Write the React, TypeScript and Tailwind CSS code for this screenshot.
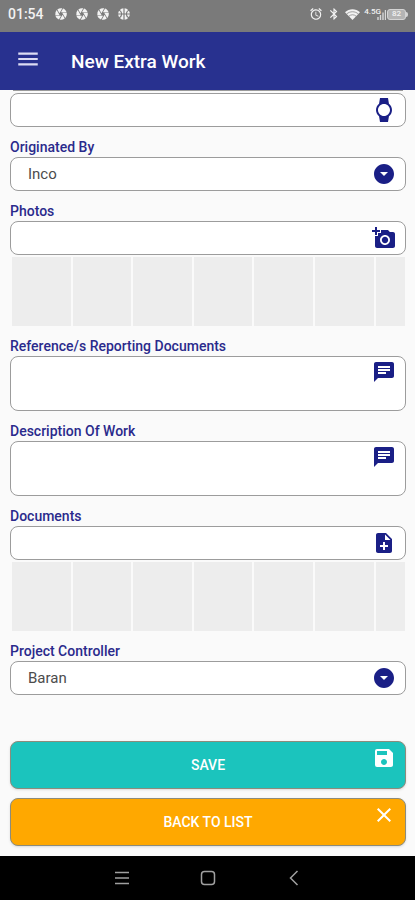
import { useState } from "react";
import type { ReactNode } from "react";
import {
  MdAddAPhoto,
  MdAlarm,
  MdArrowDropDownCircle,
  MdBluetooth,
  MdCamera,
  MdChat,
  MdClose,
  MdMenu,
  MdNoteAdd,
  MdSave,
  MdSportsBasketball,
  MdWatch,
} from "react-icons/md";

const boxClass =
  "flex rounded-lg border border-[#9c9c9c] bg-white pl-[17px] pr-[9px] text-[#1a1f86]";

function StatusBar() {
  return (
    <div className="flex h-8 items-start justify-between bg-[#7a7a7a] pl-2 pr-[7px] pt-1 text-[#f2f2f2]">
      <div className="flex h-5 items-center gap-[7px]">
        <span className="mr-[3px] text-sm font-medium">01:54</span>
        <MdCamera size={14} />
        <MdCamera size={14} />
        <MdCamera size={14} />
        <MdSportsBasketball size={14} />
      </div>
      <div className="flex h-5 items-center">
        <MdAlarm size={14} className="mr-1" />
        <MdBluetooth size={14} className="mr-1" />
        <svg width="15" height="11" viewBox="0 0 15 11" className="mr-1">
          <path d="M0 3.2C4.2-.8 10.8-.8 15 3.2L7.5 11z" fill="#f2f2f2" />
          <path
            d="M1.6 5C5 2 10 2 13.4 5M3.8 7.2C6 5.3 9 5.3 11.2 7.2"
            fill="none"
            stroke="#7a7a7a"
            strokeWidth="0.7"
          />
        </svg>
        <div className="flex h-3 items-start">
          <span className="text-[8px] font-medium leading-[8px]">4.5G</span>
        </div>
        <svg width="9" height="12" viewBox="0 0 9 12" className="-ml-1 mr-px">
          <path
            d="M1 12V9M3.5 12V7M6 12V4.5M8.5 12V2"
            stroke="#d8d8d8"
            strokeWidth="1.4"
          />
        </svg>
        <div className="flex items-center">
          <span className="flex h-[11px] w-[19px] items-center justify-center rounded-[3px] border border-[#d4d4d4] bg-[#b4b4b4] text-[8px] font-medium leading-[8px]">
            82
          </span>
          <span className="h-[5px] w-[2px] rounded-r-sm bg-[#d4d4d4]" />
        </div>
      </div>
    </div>
  );
}

function Label({ id, children }: { id: string; children: ReactNode }) {
  return (
    <label
      htmlFor={id}
      className="block h-5 text-sm font-medium leading-5 text-[#2a2a8c]"
    >
      {children}
    </label>
  );
}

function TextBox({
  id,
  name,
  action,
  icon,
}: {
  id: string;
  name?: string;
  action: string;
  icon: ReactNode;
}) {
  return (
    <div className={`${boxClass} h-[34px] items-center`}>
      <input
        id={id}
        aria-label={name}
        className="h-full min-w-0 flex-1 text-[15px] outline-none"
      />
      <button type="button" aria-label={action}>
        {icon}
      </button>
    </div>
  );
}

function SelectField({
  id,
  label,
  options,
}: {
  id: string;
  label: string;
  options: string[];
}) {
  const [value, setValue] = useState(options[0]);
  return (
    <div>
      <Label id={id}>{label}</Label>
      <div className={`${boxClass} h-[34px] items-center`}>
        <select
          id={id}
          value={value}
          onChange={(e) => setValue(e.target.value)}
          className="h-full min-w-0 flex-1 appearance-none bg-transparent text-[15px] text-[#4c4c4c] outline-none"
        >
          {options.map((o) => (
            <option key={o}>{o}</option>
          ))}
        </select>
        <MdArrowDropDownCircle size={24} className="pointer-events-none" />
      </div>
    </div>
  );
}

function NoteField({ id, label }: { id: string; label: string }) {
  return (
    <div>
      <Label id={id}>{label}</Label>
      <div className={`${boxClass} h-[55px] items-start pt-[3px]`}>
        <textarea
          id={id}
          className="h-full min-w-0 flex-1 resize-none text-[15px] outline-none"
        />
        <button type="button" aria-label="Edit text">
          <MdChat size={24} />
        </button>
      </div>
    </div>
  );
}

// six full slots, the seventh runs off the edge
function Thumbnails() {
  return (
    <div className="ml-[2px] mr-px mt-[2px] grid h-[69px] grid-cols-[repeat(6,2fr)_1fr] gap-[2px]">
      {[0, 1, 2, 3, 4, 5, 6].map((n) => (
        <div key={n} className="bg-[#ededed]" />
      ))}
    </div>
  );
}

function ActionButton({
  color,
  icon,
  children,
}: {
  color: string;
  icon: ReactNode;
  children: ReactNode;
}) {
  return (
    <button
      type="button"
      className={`grid h-12 w-full grid-cols-[24px_1fr_24px] items-center rounded-lg border border-[#8c8c7c] px-[9px] text-sm font-medium text-white shadow ${color}`}
    >
      <span className="col-start-2">{children}</span>
      <span className="self-start pt-1">{icon}</span>
    </button>
  );
}

export default function App() {
  return (
    <div className="flex min-h-screen flex-col bg-[#fafafa] font-[Roboto,sans-serif]">
      <StatusBar />
      <header className="flex h-[58px] items-center gap-[30px] bg-[#28318f] pl-[15px] text-white">
        <button type="button" aria-label="Menu" className="mb-1 text-[#dcdcf4]">
          <MdMenu size={26} />
        </button>
        <h1 className="pt-[2px] text-[19px] font-medium">New Extra Work</h1>
      </header>

      <main className="flex-1 pb-[10px] pl-[10px] pr-[9px]">
        <div className="mx-[3px] mb-[2px] h-px bg-[#9a9a9a]" />
        <form
          className="flex flex-col gap-[10px]"
          onSubmit={(e) => e.preventDefault()}
        >
          <TextBox
            id="time"
            name="Time"
            action="Pick time"
            icon={<MdWatch size={24} />}
          />
          <SelectField
            id="originated-by"
            label="Originated By"
            options={["Inco"]}
          />
          <div>
            <Label id="photos">Photos</Label>
            <TextBox
              id="photos"
              action="Add photo"
              icon={<MdAddAPhoto size={24} />}
            />
            <Thumbnails />
          </div>
          <NoteField id="references" label="Reference/s Reporting Documents" />
          <NoteField id="description" label="Description Of Work" />
          <div>
            <Label id="documents">Documents</Label>
            <TextBox
              id="documents"
              action="Add document"
              icon={<MdNoteAdd size={24} />}
            />
            <Thumbnails />
          </div>
          <SelectField
            id="project-controller"
            label="Project Controller"
            options={["Baran"]}
          />
          <div className="mt-9 flex flex-col gap-[9px]">
            <ActionButton color="bg-[#1bc4bd]" icon={<MdSave size={24} />}>
              SAVE
            </ActionButton>
            <ActionButton color="bg-[#ffa800]" icon={<MdClose size={24} />}>
              BACK TO LIST
            </ActionButton>
          </div>
        </form>
      </main>

      <nav className="flex h-11 items-center justify-center gap-[70px] bg-black text-[#a0a0a0]">
        <button type="button" aria-label="Recent apps">
          <svg width="16" height="16" viewBox="0 0 16 16" stroke="currentColor" strokeWidth="1.5">
            <path d="M1 2.5h14M1 8h14M1 13.5h14" />
          </svg>
        </button>
        <button type="button" aria-label="Home">
          <svg width="16" height="16" viewBox="0 0 16 16" fill="none" stroke="currentColor" strokeWidth="1.5">
            <rect x="1.5" y="1.5" width="13" height="13" rx="3" />
          </svg>
        </button>
        <button type="button" aria-label="Back">
          <svg width="16" height="16" viewBox="0 0 16 16" fill="none" stroke="currentColor" strokeWidth="1.5">
            <path d="M11.5 1L4.5 8l7 7" />
          </svg>
        </button>
      </nav>
    </div>
  );
}
